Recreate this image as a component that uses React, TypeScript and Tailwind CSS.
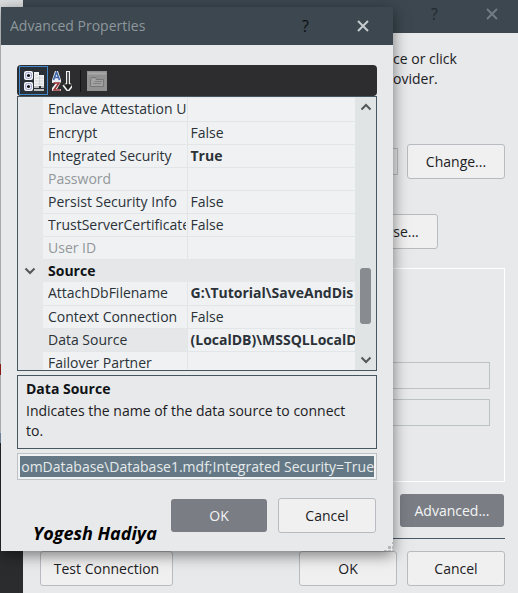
import { useEffect, useRef } from "react";
import type { ReactNode } from "react";

type PropertyRow = {
  name: string;
  value?: string;
  bold?: boolean;
  disabled?: boolean;
  category?: boolean;
  selected?: boolean;
};

const rows: PropertyRow[] = [
  { name: "Enclave Attestation U" },
  { name: "Encrypt", value: "False" },
  { name: "Integrated Security", value: "True", bold: true },
  { name: "Password", disabled: true },
  { name: "Persist Security Info", value: "False" },
  { name: "TrustServerCertificate", value: "False" },
  { name: "User ID", disabled: true },
  { name: "Source", category: true },
  { name: "AttachDbFilename", value: "G:\\Tutorial\\SaveAndDis", bold: true },
  { name: "Context Connection", value: "False" },
  {
    name: "Data Source",
    value: "(LocalDB)\\MSSQLLocalD",
    bold: true,
    selected: true,
  },
  { name: "Failover Partner" },
];

type DialogButtonProps = {
  children: ReactNode;
  className?: string;
  primary?: boolean;
};

function DialogButton({ children, className, primary }: DialogButtonProps) {
  const look = primary
    ? "h-[33px] bg-[#7a7d84] text-[#f3f4f5]"
    : "h-[35px] border border-[#b8bcc0] bg-[#f0f0f0] text-[#1c2024]";

  return (
    <button type="button" className={`shrink-0 rounded-[3px] ${look} ${className ?? ""}`}>
      {children}
    </button>
  );
}

function CloseIcon() {
  return (
    <svg viewBox="0 0 12 12" className="size-3" stroke="currentColor" strokeWidth="2" fill="none">
      <path d="M1 1l10 10M11 1L1 11" />
    </svg>
  );
}

function Chevron({ up }: { up?: boolean }) {
  return (
    <svg viewBox="0 0 12 8" className="h-2 w-3" stroke="#53575a" strokeWidth="2" fill="none">
      <path d={up ? "M1.500 6.500L6 2l4.500 4.500" : "M1.500 1.500L6 6l4.500-4.500"} />
    </svg>
  );
}

function CategorizedIcon() {
  return (
    <svg viewBox="0 0 20 20" className="size-5">
      <rect x="0" y="0" width="9" height="9" rx="2" fill="#f4f4fa" />
      <rect x="1.500" y="1.500" width="6" height="6" rx="2" fill="#eceefa" stroke="#9aa0c4" />
      <circle cx="4.500" cy="4.500" r="1.600" fill="#15171c" />
      <rect x="0" y="11" width="9" height="9" rx="2" fill="#f4f4fa" />
      <rect x="1.500" y="12.500" width="6" height="6" rx="2" fill="#eceefa" stroke="#9aa0c4" />
      <circle cx="4.500" cy="15.500" r="1.600" fill="#15171c" />
      <path d="M10 1h5v3h5v11H10z" fill="#f1f1f1" />
      <path d="M11 4h3M11 7h8M11 10h8M11 13h8M15.500 5v9" stroke="#cfd1d3" />
      <path d="M10 16h5M10 19h10M17 16h3" stroke="#f1f1f1" strokeWidth="1.500" />
    </svg>
  );
}

function SortIcon() {
  return (
    <svg viewBox="0 0 20 20" className="size-5" fill="none">
      <path d="M3 0h3l3 9v2l-4 7h4v2H0v-3l4-5H0V9z" fill="#e9edf4" />
      <path d="M1.500 9L4.500 1l3 8M2.500 6.500h4" stroke="#3e66a8" strokeWidth="1.600" />
      <path d="M1.500 12H7l-5 7h6.500" stroke="#9c3434" strokeWidth="1.600" />
      <path d="M16 0v16M12 13.500l4 5 4-5" stroke="#f1f1f1" strokeWidth="4" />
      <path d="M16 1v16M13 14l3 4 3-4z" fill="#222" stroke="#222" strokeWidth="1.500" />
    </svg>
  );
}

function PagesIcon() {
  return (
    <svg viewBox="0 0 20 20" className="size-5" fill="none">
      <rect width="20" height="20" fill="#929292" />
      <path d="M1 2.500h18" stroke="#a9a9a9" strokeWidth="2" />
      <path d="M3.500 15.500v-7l1-2h4l1 2h7v7z" fill="#a1a1a1" stroke="#777" />
      <path d="M6 12.500h8M8 10.500h7" stroke="#808080" />
    </svg>
  );
}

function PropertyGrid() {
  return (
    <div className="flex h-[275px] overflow-hidden border border-[#465762] bg-[#e5e7e9]">
      <div className="min-w-0 flex-1 pt-px">
        <table className="w-full table-fixed border-collapse text-left">
          <colgroup>
            <col className="w-[25px]" />
            <col className="w-[144px]" />
            <col />
          </colgroup>
          <tbody>
            {rows.map((row) =>
              row.category ? (
                <tr key={row.name} className="h-[23px]">
                  <td className="p-0 pl-1.5 align-middle">
                    <Chevron />
                  </td>
                  <th colSpan={2} className="p-0 pl-[5px] leading-[22px] font-bold text-[#101316]">
                    {row.name}
                  </th>
                </tr>
              ) : (
                <tr key={row.name} className="h-[23px]">
                  <td className="p-0" />
                  <th
                    scope="row"
                    className={`border-r border-b border-[#e3e6e8] p-0 pl-[5px] leading-[22px] font-normal whitespace-nowrap ${
                      row.selected ? "bg-[#e5e7e9]" : "bg-[#eff1f3]"
                    } ${row.disabled ? "text-[#93979a]" : "text-[#2b3238]"}`}
                  >
                    <div className="mr-px overflow-hidden">{row.name}</div>
                  </th>
                  <td
                    className={`overflow-hidden border-b border-[#e3e6e8] bg-[#eff1f3] p-0 pl-[3px] leading-[22px] whitespace-nowrap text-[#2b3238] ${
                      row.bold ? "font-bold" : ""
                    }`}
                  >
                    {row.value}
                  </td>
                </tr>
              ),
            )}
          </tbody>
        </table>
      </div>
      <div className="flex w-[21px] shrink-0 flex-col items-center bg-[#e0e4e5] py-[6px]">
        <Chevron up />
        <div className="mt-auto mb-8 h-14 w-[11px] rounded-[3px] bg-[#888b90]" />
        <Chevron />
      </div>
    </div>
  );
}

function AdvancedDialog() {
  const connectionRef = useRef<HTMLInputElement>(null);

  // keep the end of the connection string in view
  useEffect(() => {
    const input = connectionRef.current;
    if (input) {
      input.scrollLeft = input.scrollWidth;
    }
  }, []);

  return (
    <section className="absolute top-[7px] right-[125px] left-px bg-[#e7e9ea] shadow-[0_4px_14px_rgba(0,0,0,0.5)]">
      <header className="flex h-[38px] items-center bg-[#3c474f] pr-6 pl-[9px]">
        <h1 className="flex-1 text-[#8e979c]">Advanced Properties</h1>
        <button type="button" className="mr-12 text-base text-[#0c0f11]" aria-label="Help">
          ?
        </button>
        <button type="button" className="text-[#c6cbce]" aria-label="Close">
          <CloseIcon />
        </button>
      </header>

      <div className="px-4 pt-5 pb-[18px]">
        <div className="flex h-[31px] items-center rounded bg-[#2d2d2f] pl-0.5">
          <button
            type="button"
            className="flex h-[29px] w-[29px] items-center justify-center border border-[#4488cc] bg-[#2a3038]"
            aria-label="Categorized"
          >
            <CategorizedIcon />
          </button>
          <button type="button" className="ml-1" aria-label="Alphabetical">
            <SortIcon />
          </button>
          <div className="mr-1.5 ml-2 h-[22px] w-px bg-[#141416]" />
          <button type="button" aria-label="Property pages">
            <PagesIcon />
          </button>
        </div>

        <PropertyGrid />

        <div className="mt-1 h-[74px] border border-[#465762] pt-[3px] pr-6 pl-2 leading-5">
          <h2 className="mb-0.5 font-bold text-[#101316]">Data Source</h2>
          <p className="text-[#1c2024]">
            Indicates the name of the data source to connect to.
          </p>
        </div>

        <div className="mt-1 border border-[#bcc2c5] bg-[#f0f2f3] px-0.5 py-[2px]">
          <input
            ref={connectionRef}
            readOnly
            aria-label="Connection string"
            defaultValue="omDatabase\Database1.mdf;Integrated Security=True"
            className="block h-[21px] w-full bg-[#647985] text-right text-[#e6eaec] outline-none"
          />
        </div>

        <div className="mt-[18px] flex items-center justify-end gap-[11px] pr-px">
          <DialogButton primary className="w-24">
            OK
          </DialogButton>
          <DialogButton className="w-[98px]">Cancel</DialogButton>
        </div>
      </div>

      <span className="absolute bottom-1.5 left-8 text-lg leading-6 font-bold text-black italic">
        Yogesh Hadiya
      </span>
      <svg viewBox="0 0 9 9" className="absolute right-0 bottom-0 size-[9px]" fill="#b4b7b9">
        <path d="M8 0h1v2H8zM4 4h3v3H4zM8 4h1v3H8zM0 8h3v1H0zM4 8h3v1H4zM8 8h1v1H8z" />
      </svg>
    </section>
  );
}

function ConnectionWindow() {
  return (
    <section className="flex-1 bg-[#e7e9ea]">
      <header className="flex h-[33px] items-center justify-end bg-[#3c474f] pr-5 pb-[6px]">
        <button type="button" className="mr-12 text-base text-[#222a2f]" aria-label="Help">
          ?
        </button>
        <button type="button" className="text-[#727c82]" aria-label="Close">
          <CloseIcon />
        </button>
      </header>

      <div className="pt-4 pr-[13px] pb-[7px] pl-[17px] text-[#1c2024]">
        <p className="ml-auto w-28 leading-5">
          ce or click
          <br />
          ovider.
        </p>

        <div className="mt-[55px] flex items-center gap-[9px]">
          <input readOnly aria-label="Data source" className="h-[27px] min-w-0 flex-1 border border-[#bcc0c3]" />
          <DialogButton className="w-[98px]">Change...</DialogButton>
        </div>

        <div className="mt-[35px] flex justify-end pr-[67px]">
          <DialogButton className="w-[98px]">Browse...</DialogButton>
        </div>

        <div className="mt-[19px] flex h-[214px] flex-col gap-[10px] border border-white px-3.5 pt-[93px]">
          <input readOnly aria-label="User name" className="h-[27px] border border-[#bcc3c7]" />
          <input readOnly aria-label="Password" className="h-[27px] border border-[#bcc3c7]" />
        </div>

        <div className="mt-3 flex justify-end pr-px">
          <DialogButton primary className="w-[104px]">
            Advanced...
          </DialogButton>
        </div>

        <hr className="mt-[11px] mb-3 border-[#4a5966]" />

        <div className="flex gap-[10px]">
          <DialogButton className="mr-auto w-[133px]">Test Connection</DialogButton>
          <DialogButton className="w-[98px]">OK</DialogButton>
          <DialogButton className="w-[98px]">Cancel</DialogButton>
        </div>
      </div>
    </section>
  );
}

// what is left of the desktop beside the two windows
function DesktopEdge() {
  return (
    <div className="flex w-[23px] shrink-0 flex-col bg-[#2b2c2e]">
      <div className="h-[364px] bg-[#dcdee0]" />
      <div className="h-[11px] bg-[#b0241c]" />
      <div className="h-[58px] bg-[#dcdee0]" />
      <div className="h-2.5 bg-[#8fa6c4]" />
    </div>
  );
}

function App() {
  return (
    <main className="relative flex min-h-screen overflow-hidden bg-[#2b2c2e] font-['Open_Sans','Noto_Sans',sans-serif] text-sm leading-5">
      <DesktopEdge />
      <ConnectionWindow />
      <AdvancedDialog />
    </main>
  );
}

export default App;
